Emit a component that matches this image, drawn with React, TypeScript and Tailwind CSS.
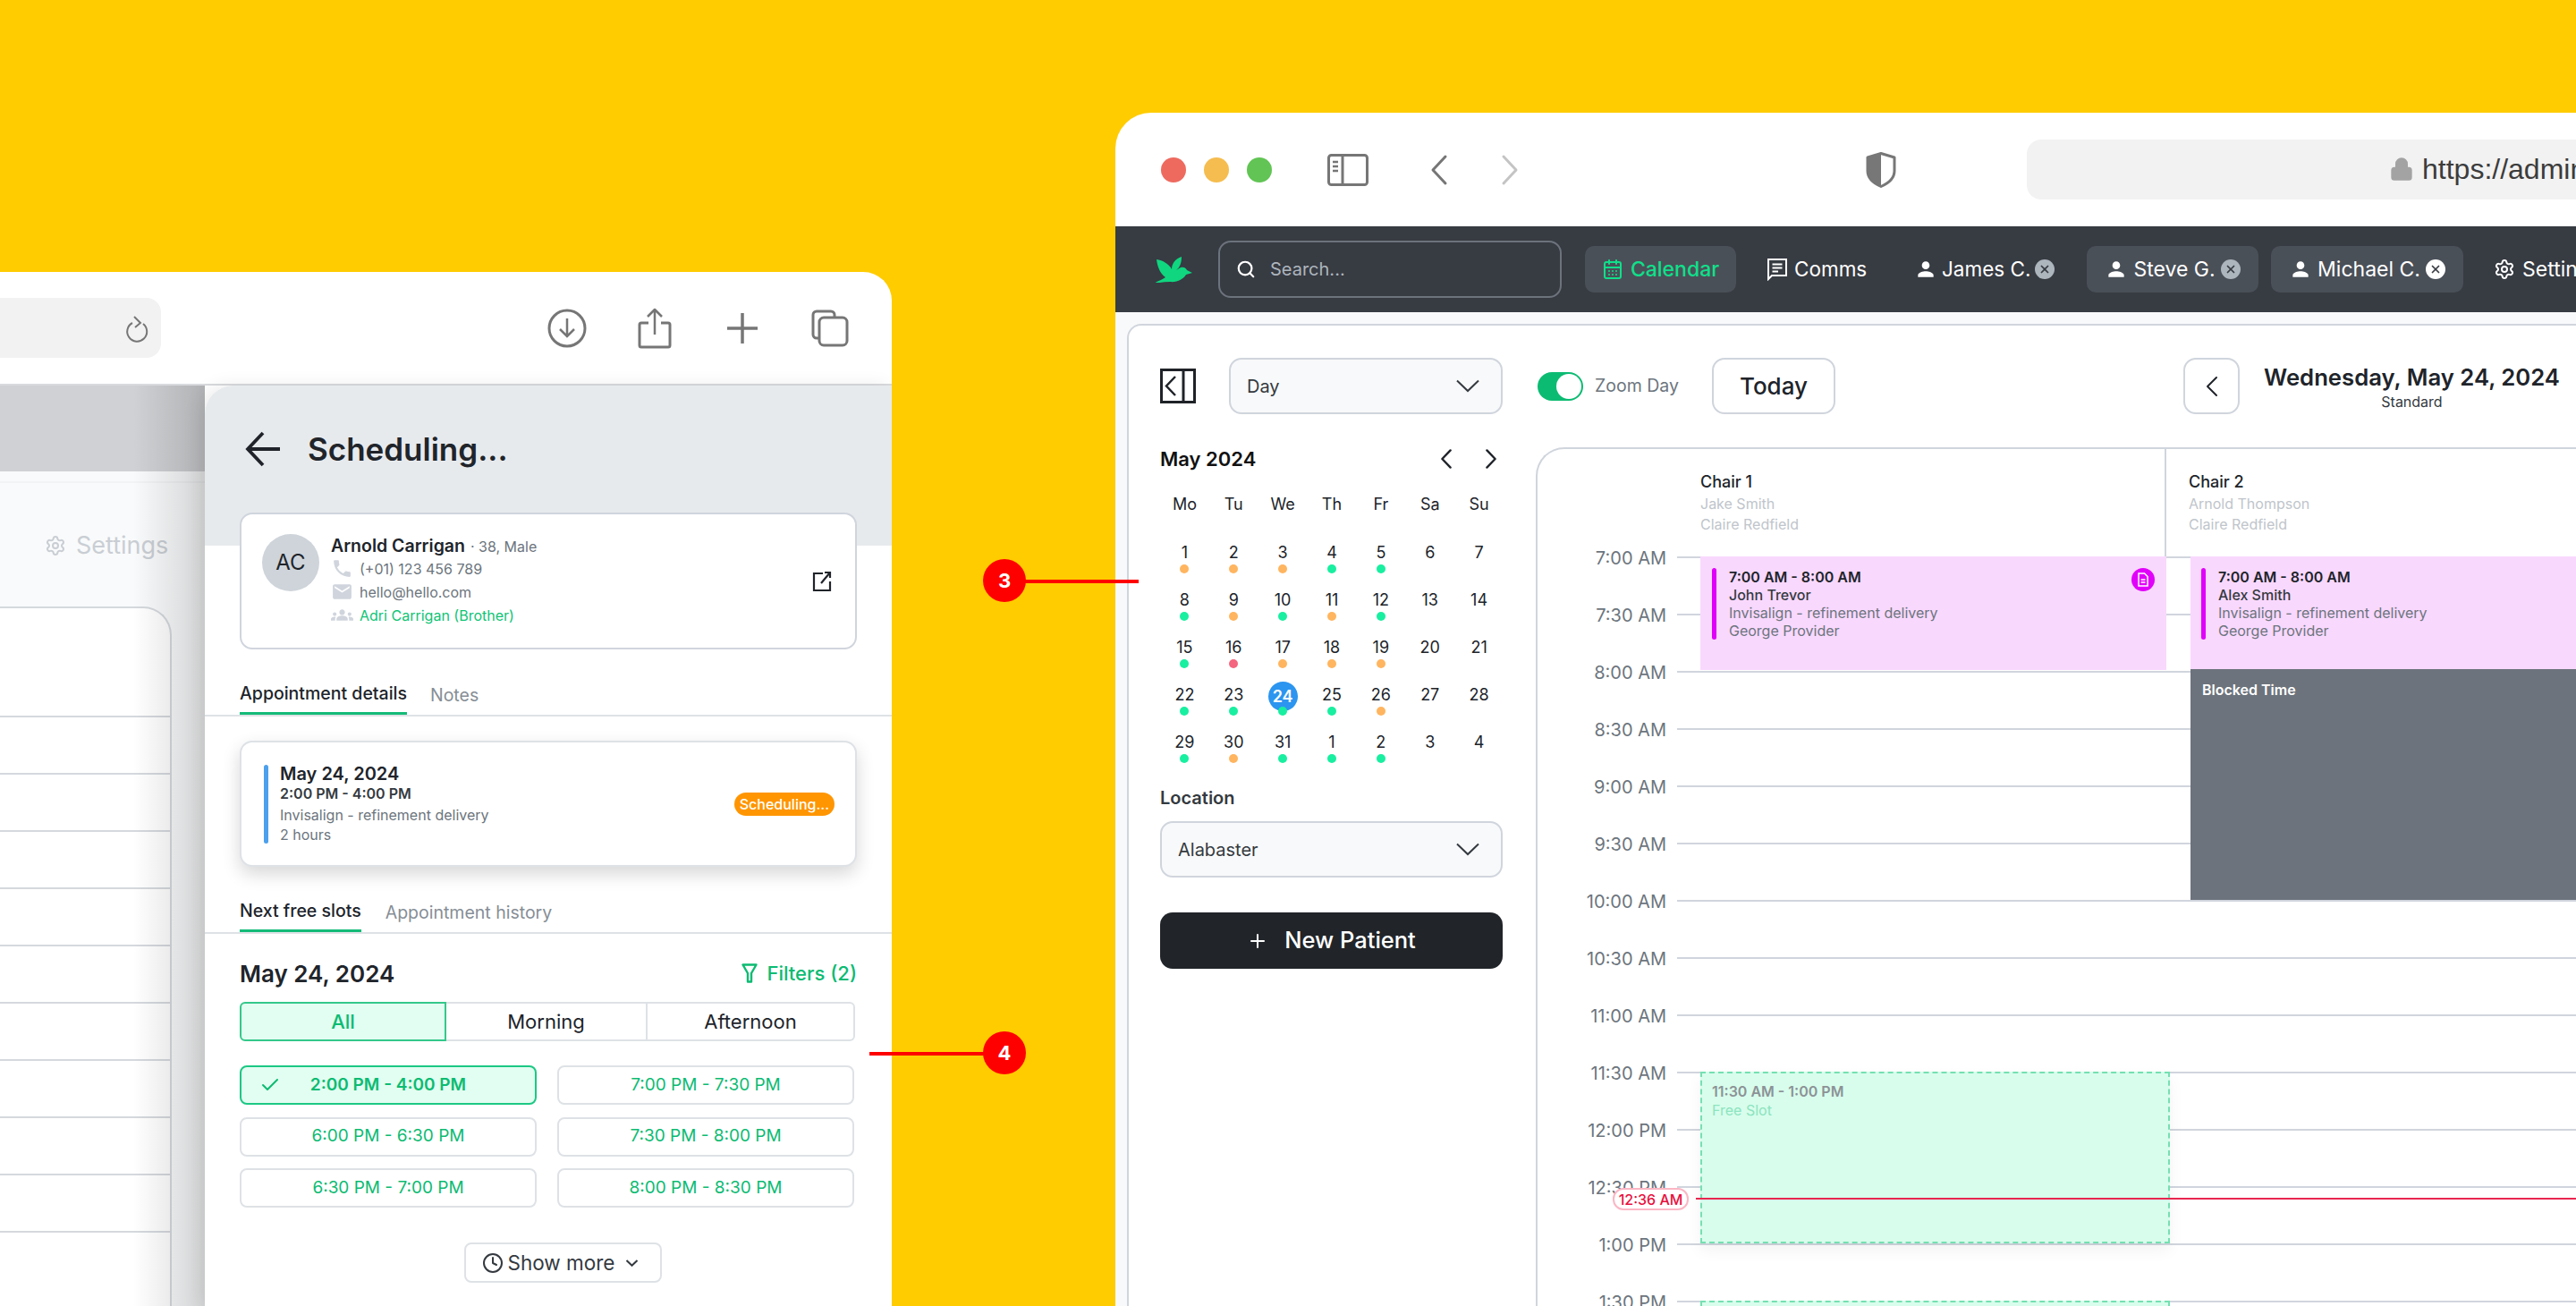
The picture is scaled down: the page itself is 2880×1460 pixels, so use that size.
import React from "react";
import { Check, Clock, CalendarDays, Search, Settings, Plus, X, Lock } from "lucide-react";
import { MdPhone, MdEmail, MdGroups, MdPerson } from "react-icons/md";

const Bird = () => (
  <svg width="44" height="30" viewBox="0 0 44 30" fill="#0fd67f">
    <path d="M3 4 C10 5 17 9 20 15 C20 9 24 3 31 1 C31 8 29 13 25 16 L30 13 C34 12 36 14 37 16 L43 19 L36 21 C33 26 26 30 18 29 C12 29 6 30 0 31 C4 28 9 27 13 24 C7 20 4 12 3 4 Z" />
  </svg>
);

const SidebarIcon = () => (
  <svg width="46" height="36" viewBox="0 0 46 36" fill="none" stroke="#767676" strokeWidth="3">
    <rect x="1.5" y="1.5" width="43" height="33" rx="3" />
    <path d="M17 2v32" />
    <path d="M6 9h6M6 14h6M6 19h6" strokeWidth="2.5" />
  </svg>
);

const Shield = () => (
  <svg width="34" height="40" viewBox="0 0 34 40">
    <path d="M17 1.5 L32 6 V21 C32 29 25 35 17 38.5 C9 35 2 29 2 21 V6 Z" fill="#fff" stroke="#777" strokeWidth="3" strokeLinejoin="round" />
    <path d="M17 1.5 L2 6 V21 C2 29 9 35 17 38.5 Z" fill="#777" />
  </svg>
);

const Collapse = () => (
  <svg width="40" height="39" viewBox="0 0 40 39" fill="none" stroke="#1f2328" strokeWidth="3">
    <rect x="1.5" y="1.5" width="37" height="36" />
    <path d="M26 2v35" />
    <path d="M17 9 L7 19.5 L17 30" strokeWidth="2.5" />
  </svg>
);

const Funnel = () => (
  <svg width="18" height="22" viewBox="0 0 18 22" fill="none" stroke="#0cbb72" strokeWidth="2.4" strokeLinejoin="round">
    <path d="M1.5 1.5 H16.5 L11 11 V20.5 H7 V11 Z" />
  </svg>
);

const Comms = () => (
  <svg width="24" height="26" viewBox="0 0 24 26" fill="none" stroke="#fff" strokeWidth="2">
    <path d="M2 2 H22 V20 H6 L2 24 Z" />
    <path d="M6.5 7.5 H17.5 M6.5 11.5 H17.5 M6.5 15.5 H13" />
  </svg>
);

const CloseDot = ({ c }: { c: string }) => (
  <span className={`flex h-[22px] w-[22px] shrink-0 items-center justify-center rounded-full ${c}`}>
    <X size={14} strokeWidth={3} color="#373b42" />
  </span>
);

const DocBadge = () => (
  <svg width="12" height="16" viewBox="0 0 12 16" fill="none" stroke="#fff" strokeWidth="1.6">
    <path d="M1 1 H7.5 L11 4.5 V15 H1 Z M3.5 8 H8.5 M3.5 11 H8.5" />
  </svg>
);

const ChevDown = ({ w = 26 }: { w?: number }) => (
  <svg width={w} height={w === 26 ? 15 : 8} viewBox="0 0 26 15" fill="none" stroke="#343a40" strokeWidth={w === 26 ? 2 : 4}><path d="M1 1.5 L13 13 L25 1.5" /></svg>
);

const Chev = ({ dir, w, h, c, sw }: { dir: "l" | "r"; w: number; h: number; c: string; sw: number }) => (
  <svg width={w} height={h} viewBox={`0 0 ${w} ${h}`} fill="none" stroke={c} strokeWidth={sw} strokeLinecap="round" strokeLinejoin="round">
    <path d={dir === "l" ? `M${w - sw} ${sw} L${sw} ${h / 2} L${w - sw} ${h - sw}` : `M${sw} ${sw} L${w - sw} ${h / 2} L${sw} ${h - sw}`} />
  </svg>
);

const ToolIcons = () => (
  <div className="ml-auto flex items-center gap-[54px] pr-[47px]">
    <div className="flex w-[44px] justify-center"><svg width="44" height="44" viewBox="0 0 44 44" fill="none" stroke="#767676" strokeWidth="3"><circle cx="22" cy="22" r="20" /><path d="M22 11 V31 M14 23 L22 31 L30 23" strokeWidth="2.5" /></svg></div>
    <div className="flex w-[44px] justify-center"><svg width="38" height="46" viewBox="0 0 38 46" fill="none" stroke="#767676" strokeWidth="3" strokeLinejoin="round"><path d="M12 17 H4 A2 2 0 0 0 2 19 V42 A2 2 0 0 0 4 44 H34 A2 2 0 0 0 36 42 V19 A2 2 0 0 0 34 17 H26" /><path d="M19 30 V3 M11 10 L19 2 L27 10" strokeWidth="2.5" /></svg></div>
    <div className="flex w-[44px] justify-center"><svg width="36" height="36" viewBox="0 0 36 36" fill="none" stroke="#767676" strokeWidth="3.5"><path d="M18 1 V35 M1 18 H35" /></svg></div>
    <div className="flex w-[44px] justify-center"><svg width="42" height="42" viewBox="0 0 42 42" fill="none" stroke="#767676" strokeWidth="3"><path d="M8 32 H6 A4 4 0 0 1 2 28 V6 A4 4 0 0 1 6 2 H22 A4 4 0 0 1 26 6 V9" /><rect x="9" y="9" width="31" height="31" rx="5" /></svg></div>
  </div>
);

const Tab = ({ t, on }: { t: string; on?: boolean }) => (
  <div className={`flex h-full items-center pt-[30px] ${on ? "-mb-[2px] border-b-[3px] border-[#14bb78] font-medium text-[#20242a]" : "text-[#868e96]"}`}>{t}</div>
);

const slots = ["2:00 PM - 4:00 PM", "7:00 PM - 7:30 PM", "6:00 PM - 6:30 PM", "7:30 PM - 8:00 PM", "6:30 PM - 7:00 PM", "8:00 PM - 8:30 PM"];

const LeftWindow = () => (
  <div className="absolute left-0 top-[304px] flex h-[1156px] w-[997px] flex-col overflow-hidden rounded-tr-[32px] bg-white">
    <div className="flex h-[127px] shrink-0 items-center border-b-2 border-[#d8dadd]">
      <div className="flex h-[67px] w-[180px] items-center justify-end rounded-r-[16px] bg-[#f2f2f2] pr-[14px] text-[#767676]">
        <svg width="26" height="34" viewBox="0 0 26 34" fill="none" stroke="#767676" strokeWidth="2"><path d="M8 9 A11 11 0 1 0 20 10 M10 2 L17 9 L11 14" transform="translate(0 2)" /></svg>
      </div>
      <ToolIcons />
    </div>
    <div className="flex min-h-0 flex-1">
      <div className="relative flex w-[229px] shrink-0 flex-col overflow-hidden bg-[#f9fafb]">
        <div className="h-[96px] shrink-0 bg-[#cfd1d4]" />
        <div className="h-[13px] shrink-0 border-b-2 border-[#f2f3f5]" />
        <div className="flex h-[138px] shrink-0 items-start justify-start gap-[11px] pl-[50px] pt-[52px] text-[27px] leading-[36px] text-[#c9ced4]">
          <Settings size={24} className="mt-[6px]" />
          Settings
        </div>
        <div className="w-[192px] flex-1 rounded-tr-[32px] border-r-2 border-t-2 border-[#d5d9de] bg-white pt-[120px]">
          {Array.from({ length: 10 }).map((_, i) => (
            <div key={i} className="h-[64px] border-t-2 border-[#d5d9de]" />
          ))}
        </div>
        <div className="absolute inset-y-0 right-0 w-[80px] bg-gradient-to-r from-transparent to-black/15" />
      </div>
      <div className="relative flex-1 rounded-tl-[32px] bg-white [box-shadow:-6px_0_20px_rgba(0,0,0,0.08)]">
        <div className="absolute inset-x-0 top-0 h-[179px] rounded-tl-[32px] bg-[#e7eaed]" />
        <div className="relative flex flex-col">
          <div className="flex h-[142px] items-center gap-[27px] pl-[34px]">
            <svg width="54" height="54" viewBox="0 0 54 54" fill="none" stroke="#20242a" strokeWidth="3.8"><path d="M50 27 H15 M31 9 L14 27 L31 45" /></svg>
            <span className="text-[35px] font-semibold text-[#20242a]">Scheduling...</span>
          </div>
          <div className="mx-[39px] flex h-[153px] items-center rounded-[14px] border-2 border-[#d0d5dd] bg-white pl-[23px] pr-[26px]">
            <div className="mb-[42px] flex h-[64px] w-[64px] shrink-0 items-center justify-center rounded-full bg-[#ced4da] text-[24px] text-[#20242a]">AC</div>
            <div className="mb-[2px] ml-[13px] flex flex-col text-[16px] text-[#6c757d]">
              <div className="flex h-[26px] items-center gap-[6px] pt-[2px]"><span className="text-[19.5px] font-semibold text-[#20242a]">Arnold Carrigan</span><span>· 38, Male</span></div>
              <div className="flex h-[26px] items-center gap-[7px]"><MdPhone size={25} color="#d0d5dd" />(+01) 123 456 789</div>
              <div className="flex h-[26px] items-center gap-[7px]"><MdEmail size={25} color="#d0d5dd" />hello@hello.com</div>
              <div className="flex h-[26px] items-center gap-[7px]"><MdGroups size={25} color="#d0d5dd" /><span className="text-[#0fc476]">Adri Carrigan (Brother)</span></div>
            </div>
            <svg className="ml-auto" width="22" height="24" viewBox="0 0 22 24" fill="none" stroke="#20242a" strokeWidth="2.2"><path d="M12 3 H2 V22 H20 V12 M10 14 L20 2 M14 2 H20 V8" /></svg>
          </div>
          <div className="flex h-[75px] gap-[26px] border-b-2 border-[#dee2e6] pl-[39px] text-[19.5px]">
            <Tab t="Appointment details" on />
            <Tab t="Notes" />
          </div>
          <div className="mx-[39px] mt-[27px] flex h-[141px] items-center rounded-[14px] border-2 border-[#dee2e6] bg-white pl-[25px] pr-[23px] [box-shadow:0_8px_20px_rgba(0,0,0,0.16)]">
            <div className="h-[88px] w-[5px] rounded-full bg-[#4da0ec]" />
            <div className="ml-[13px] flex flex-col text-[16px] leading-[22px] text-[#6c757d]">
              <span className="text-[20px] font-semibold leading-[24px] text-[#20242a]">May 24, 2024</span>
              <span className="font-semibold leading-[20px] text-[#343a40]">2:00 PM - 4:00 PM</span>
              <span className="mt-[3px]">Invisalign - refinement delivery</span>
              <span>2 hours</span>
            </div>
            <div className="ml-auto flex h-[26px] items-center rounded-[13px] bg-[#ff9500] px-[6px] text-[16px] font-medium text-white">Scheduling...</div>
          </div>
          <div className="flex h-[75px] gap-[27px] border-b-2 border-[#dee2e6] pl-[39px] text-[19.5px]">
            <Tab t="Next free slots" on />
            <Tab t="Appointment history" />
          </div>
          <div className="mx-[39px] flex flex-col">
            <div className="flex h-[76px] items-center justify-between pt-[12px]">
              <span className="text-[26px] font-semibold text-[#20242a]">May 24, 2024</span>
              <span className="flex items-center gap-[10px] text-[22px] font-medium text-[#0cbb72]"><Funnel />Filters (2)</span>
            </div>
            <div className="flex h-[44px] w-[688px] text-[22px] text-[#20242a]">
              <div className="flex w-[231px] items-center justify-center rounded-l-[6px] border-2 border-[#34c88b] bg-[#e2fdf1] font-medium text-[#0cbb72]">All</div>
              <div className="flex w-[225px] items-center justify-center border-y-2 border-r-2 border-[#dee2e6]">Morning</div>
              <div className="flex flex-1 items-center justify-center rounded-r-[6px] border-y-2 border-r-2 border-[#dee2e6]">Afternoon</div>
            </div>
            <div className="mt-[27px] grid w-[687px] grid-cols-2 gap-x-[23px] gap-y-[13.5px] text-[19px] text-[#0cbb72]">
              {slots.map((s, i) => (
                <div key={s} className={`relative flex h-[44px] items-center justify-center rounded-[8px] border-2 ${i === 0 ? "border-[#1cc884] bg-[#e2fdf1] font-semibold" : "border-[#dee2e6]"}`}>
                  {i === 0 && <Check size={24} strokeWidth={2} className="absolute left-[20px]" />}
                  {s}
                </div>
              ))}
            </div>
            <div className="mt-[39px] flex justify-center pl-[32px]">
              <div className="flex h-[45px] w-[221px] items-center justify-center gap-[5px] rounded-[8px] border-2 border-[#dee2e6] pr-[6px] text-[22.5px] text-[#343a40]">
                <Clock size={24} strokeWidth={2} />Show more
                <span className="ml-[8px] flex"><ChevDown w={13} /></span>
              </div>
            </div>
          </div>
        </div>
      </div>
    </div>
  </div>
);

const NavItem = ({ children, pill, w }: { children: React.ReactNode; pill?: boolean; w: string }) => (
  <div className={`flex h-[52px] shrink-0 items-center rounded-[10px] text-[23px] ${w} ${pill ? "bg-[#4a5058]" : ""}`}>{children}</div>
);

const dotG = "bg-[#19efa0]";
const dotO = "bg-[#ffb55f]";
const dotR = "bg-[#f4657f]";
const days: [string, string][] = [
  ["1", dotO], ["2", dotO], ["3", dotO], ["4", dotG], ["5", dotG], ["6", ""], ["7", ""],
  ["8", dotG], ["9", dotO], ["10", dotG], ["11", dotO], ["12", dotG], ["13", ""], ["14", ""],
  ["15", dotG], ["16", dotR], ["17", dotO], ["18", dotO], ["19", dotO], ["20", ""], ["21", ""],
  ["22", dotG], ["23", dotG], ["24", dotG], ["25", dotG], ["26", dotO], ["27", ""], ["28", ""],
  ["29", dotG], ["30", dotO], ["31", dotG], ["1", dotG], ["2", dotG], ["3", ""], ["4", ""],
];

const times = ["7:00 AM", "7:30 AM", "8:00 AM", "8:30 AM", "9:00 AM", "9:30 AM", "10:00 AM", "10:30 AM", "11:00 AM", "11:30 AM", "12:00 PM", "12:30 PM", "1:00 PM", "1:30 PM"];

const Appt = ({ name, cls, badge }: { name: string; cls: string; badge?: boolean }) => (
  <div className={`absolute flex bg-[#f9d8fe] pt-[13px] text-[16px] leading-[20px] text-[#6c757d] ${cls}`}>
    <div className="h-[80px] w-[5px] rounded-full bg-[#e100fa]" />
    <div className="ml-[14px] flex flex-col">
      <span className="font-semibold text-[#20242a]">7:00 AM - 8:00 AM</span>
      <span className="font-medium text-[#343a40]">{name}</span>
      <span>Invisalign - refinement delivery</span>
      <span>George Provider</span>
    </div>
    {badge && <div className="absolute right-[13px] top-[13px] flex h-[26px] w-[26px] items-center justify-center rounded-full bg-[#e100fa]"><DocBadge /></div>}
  </div>
);

const RightWindow = () => (
  <div className="absolute left-[1247px] top-[126px] flex h-[1334px] w-[1633px] flex-col overflow-hidden rounded-tl-[40px] bg-white">
    <div className="flex h-[127px] shrink-0 items-center pl-[51px]">
      <span className="h-[28px] w-[28px] shrink-0 rounded-full bg-[#ee6a5f]" />
      <span className="ml-[20px] h-[28px] w-[28px] shrink-0 rounded-full bg-[#f5bd4f]" />
      <span className="ml-[20px] h-[28px] w-[28px] shrink-0 rounded-full bg-[#61c454]" />
      <span className="ml-[62px]"><SidebarIcon /></span>
      <span className="ml-[69px]"><Chev dir="l" w={20} h={36} c="#767676" sw={3} /></span>
      <span className="ml-[59px]"><Chev dir="r" w={20} h={36} c="#c4c4c4" sw={3} /></span>
      <span className="ml-[388px]"><Shield /></span>
      <div className="ml-[146px] flex h-[67px] flex-1 items-center rounded-l-[16px] bg-[#f2f2f2] pb-[2px] pl-[405px] text-[32px] text-[#3c3c3c] [font-family:'Liberation_Sans',sans-serif]">
        <Lock size={28} fill="#a3a3a3" color="#a3a3a3" className="mr-[9px] shrink-0" />
        https://admin
      </div>
    </div>
    <div className="flex h-[96px] shrink-0 items-center bg-[#373b42] pl-[43px] text-white">
      <span className="shrink-0"><Bird /></span>
      <div className="ml-[28px] flex h-[64px] w-[384px] shrink-0 items-center rounded-[14px] border-2 border-[#6c737c] pl-[18px] text-[20px] text-[#adb5bd]">
        <Search size={22} color="#fff" strokeWidth={2.4} className="mr-[16px]" />Search...
      </div>
      <div className="ml-[26px] shrink-0"><NavItem pill w="w-[169px] justify-center gap-[8px] font-medium text-[#0fe08a]"><CalendarDays size={24} color="#0fe08a" />Calendar</NavItem></div>
      <NavItem w="ml-[23px] w-[176px] pl-[11px] gap-[7px]"><Comms /><span className="text-[22.5px]">Comms</span></NavItem>
      <NavItem w="w-[193px] gap-[5px]"><MdPerson size={26} /><span className="text-[22.5px]">James C.</span><CloseDot c="bg-[#adb5bd]" /></NavItem>
      <NavItem pill w="w-[192px] justify-center gap-[6px]"><MdPerson size={26} />Steve G.<CloseDot c="bg-[#adb5bd]" /></NavItem>
      <NavItem pill w="ml-[14px] w-[215px] justify-center gap-[6px]"><MdPerson size={26} />Michael C.<CloseDot c="bg-white" /></NavItem>
      <NavItem w="ml-[34px] gap-[8px] w-[120px]"><Settings size={24} className="shrink-0" />Settings</NavItem>
    </div>
    <div className="flex min-h-0 flex-1 bg-[#f8f9fa] pl-[13px] pt-[13px]">
      <div className="flex min-w-0 flex-1 rounded-tl-[16px] border-l-2 border-t-2 border-[#d0d5dd] bg-white text-[#20242a]">
        <div className="flex w-[455px] shrink-0 flex-col pl-[35px] pr-[37px] pt-[36px]">
          <div className="flex h-[63px] items-center">
            <Collapse />
            <div className="ml-[37px] flex h-[63px] flex-1 items-center justify-between rounded-[14px] border-2 border-[#d0d5dd] bg-[#f8f9fa] pl-[18px] pr-[24px] text-[20px] text-[#343a40]">Day<ChevDown /></div>
          </div>
          <div className="mt-[37px] flex h-[26px] items-center justify-between">
            <span className="text-[22px] font-semibold text-[#111]">May 2024</span>
            <div className="-mr-[2px] flex items-center gap-[36px] pr-[8px]"><Chev dir="l" w={14} h={24} c="#20242a" sw={2.4} /><Chev dir="r" w={14} h={24} c="#20242a" sw={2.4} /></div>
          </div>
          <div className="mt-[24px] grid h-[28px] w-[384px] grid-cols-7 text-center text-[18px] leading-[28px] text-[#20242a]">
            {["Mo", "Tu", "We", "Th", "Fr", "Sa", "Su"].map((d) => <span key={d}>{d}</span>)}
          </div>
          <div className="mt-[26px] grid w-[384px] grid-cols-7 text-[18px] text-[#20242a]">
            {days.map(([n, c], i) => (
              <div key={i} className="relative flex h-[53px] flex-col items-center">
                {n === "24" && i === 23 ? (
                  <span className="mt-[-1px] flex h-[33px] w-[33px] items-center justify-center rounded-full bg-[#2b95f0] font-semibold text-white">24</span>
                ) : (
                  <span className="h-[28px] leading-[28px]">{n}</span>
                )}
                {c && <span className={`absolute top-[27px] h-[10px] w-[10px] rounded-full ${c}`} />}
              </div>
            ))}
          </div>
          <div className="mt-[11px] h-[24px] text-[20px] font-semibold leading-[24px] text-[#343a40]">Location</div>
          <div className="mt-[14px] flex h-[63px] items-center justify-between rounded-[14px] border-2 border-[#d0d5dd] bg-[#f8f9fa] pl-[18px] pr-[24px] text-[20px] text-[#343a40]">Alabaster<ChevDown /></div>
          <div className="mt-[39px] flex h-[63px] items-center justify-center gap-[18px] rounded-[14px] bg-[#212529] text-[25.5px] font-medium text-white"><Plus size={24} strokeWidth={2} />New Patient</div>
        </div>
        <div className="flex min-w-0 flex-1 flex-col pt-[36px]">
          <div className="flex h-[63px] items-center whitespace-nowrap">
            <div className="ml-[2px] flex h-[32px] w-[51px] shrink-0 items-center rounded-full bg-[#0cbb72] p-[2px] pl-[21px]"><span className="h-[28px] w-[28px] rounded-full bg-white" /></div>
            <span className="ml-[13px] w-[92px] shrink-0 text-[19.5px] text-[#6c757d]">Zoom Day</span>
            <div className="ml-[39px] flex h-[63px] w-[138px] shrink-0 items-center justify-center rounded-[14px] border-2 border-[#d0d5dd] text-[26px] font-medium">Today</div>
            <div className="ml-[389px] flex h-[63px] w-[63px] shrink-0 items-center justify-center rounded-[14px] border-2 border-[#d0d5dd]"><Chev dir="l" w={14} h={24} c="#20242a" sw={2} /></div>
            <div className="ml-[27px] flex shrink-0 flex-col items-center">
              <span className="text-[25.7px] font-semibold leading-[34px]">Wednesday, May 24, 2024</span>
              <span className="text-[16px] leading-[20px] text-[#343a40]">Standard</span>
            </div>
          </div>
          <div className="mt-[37px] flex min-h-0 flex-1 flex-col overflow-hidden rounded-tl-[32px] border-l-2 border-t-2 border-[#d0d5dd]">
            <div className="flex h-[120px] shrink-0">
              <div className="w-[182px] shrink-0" />
              <div className="w-[521px] shrink-0 border-r-2 border-[#d0d5dd] pt-[24px] text-[16px] leading-[23px] text-[#c0c5cb]">
                <div className="text-[18px] font-medium leading-[26px] text-[#20242a]">Chair 1</div>
                <div>Jake Smith</div>
                <div>Claire Redfield</div>
              </div>
              <div className="pl-[25px] pt-[24px] text-[16px] leading-[23px] text-[#c0c5cb]">
                <div className="text-[18px] font-medium leading-[26px] text-[#20242a]">Chair 2</div>
                <div>Arnold Thompson</div>
                <div>Claire Redfield</div>
              </div>
            </div>
            <div className="relative flex-1">
              {times.map((t) => (
                <div key={t} className="flex h-[64px]">
                  <span className="-mt-[12px] h-[28px] w-[144px] shrink-0 text-right text-[20px] leading-[28px] text-[#6c757d]">{t}</span>
                  <div className="ml-[12px] flex-1 border-t-2 border-[#d0d5dd]" />
                </div>
              ))}
              <Appt name="John Trevor" cls="left-[182px] top-0 h-[127px] w-[521px] pl-[13px]" badge />
              <Appt name="Alex Smith" cls="left-[730px] right-0 top-0 h-[126px] pl-[12px]" />
              <div className="absolute left-[730px] right-0 top-[126px] h-[258px] bg-[#6c737c] pl-[13px] pt-[13px] text-[16px] font-semibold leading-[20px] text-white">Blocked Time</div>
              <div className="absolute left-[182px] top-[576px] h-[192px] w-[525px] border-2 border-dashed border-[#75e0b2] bg-[#d8fdec] pl-[11px] pt-[10px] text-[16px] leading-[20px] [box-shadow:0_8px_16px_rgba(0,0,0,0.05)]">
                <div className="font-semibold text-[#8c9296]">11:30 AM - 1:00 PM</div>
                <div className="mt-[1px] text-[#8ce4bf]">Free Slot</div>
              </div>
              <div className="absolute left-[182px] top-[832px] h-[60px] w-[525px] border-2 border-dashed border-[#75e0b2] bg-[#d8fdec]" />
              <div className="absolute left-[177px] right-0 top-[717px] h-[2px] bg-[#e8264f]" />
              <div className="absolute left-[84px] top-[706px] flex h-[25px] w-[85px] items-center justify-center rounded-[12px] border-2 border-[#fbb6c4] bg-white text-[16px] font-medium text-[#e8103c]">12:36 AM</div>
            </div>
          </div>
        </div>
      </div>
    </div>
  </div>
);

export default function App() {
  return (
    <div className="relative h-[1460px] w-[2880px] overflow-hidden bg-[#ffcc00] [font-family:Inter,sans-serif]">
      <LeftWindow />
      <RightWindow />
      <div className="absolute left-[1099px] top-[625px] flex items-center">
        <div className="flex h-[48px] w-[48px] items-center justify-center rounded-full bg-[#ff0000] text-[22px] font-bold text-white">3</div>
        <div className="-ml-[1px] mt-[2px] h-[4px] w-[127px] bg-[#ff0000]" />
      </div>
      <div className="absolute left-[972px] top-[1153px] flex items-center">
        <div className="mt-[2px] h-[4px] w-[128px] bg-[#ff0000]" />
        <div className="-ml-[1px] flex h-[48px] w-[48px] items-center justify-center rounded-full bg-[#ff0000] text-[22px] font-bold text-white">4</div>
      </div>
    </div>
  );
}
